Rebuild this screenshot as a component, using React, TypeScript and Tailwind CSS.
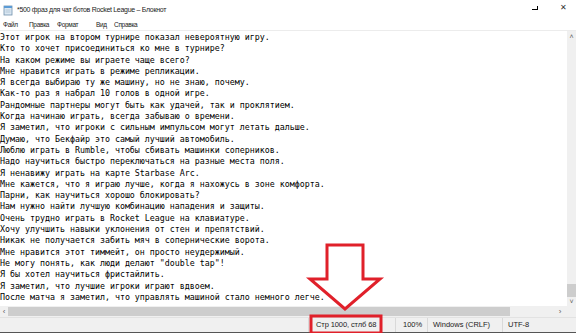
const lines = [
  "Этот игрок на втором турнире показал невероятную игру.",
  "Кто то хочет присоединиться ко мне в турнире?",
  "На каком режиме вы играете чаще всего?",
  "Мне нравится играть в режиме репликации.",
  "Я всегда выбираю ту же машину, но не знаю, почему.",
  "Как-то раз я набрал 10 голов в одной игре.",
  "Рандомные партнеры могут быть как удачей, так и проклятием.",
  "Когда начинаю играть, всегда забываю о времени.",
  "Я заметил, что игроки с сильным импульсом могут летать дальше.",
  "Думаю, что Бекфайр это самый лучший автомобиль.",
  "Люблю играть в Rumble, чтобы сбивать машинки соперников.",
  "Надо научиться быстро переключаться на разные места поля.",
  "Я ненавижу играть на карте Starbase Arc.",
  "Мне кажется, что я играю лучше, когда я нахожусь в зоне комфорта.",
  "Парни, как научиться хорошо блокировать?",
  "Нам нужно найти лучшую комбинацию нападения и защиты.",
  "Очень трудно играть в Rocket League на клавиатуре.",
  "Хочу улучшить навыки уклонения от стен и препятствий.",
  "Никак не получается забить мяч в сопернические ворота.",
  "Мне нравится этот тиммейт, он просто неудержимый.",
  "Не могу понять, как люди делают \"double tap\"!",
  "Я бы хотел научиться фристайлить.",
  "Я заметил, что лучшие игроки играют вдвоем.",
  "После матча я заметил, что управлять машиной стало немного легче.",
];

const menu = [
  { label: "Файл", w: "w-[26px]" },
  { label: "Правка", w: "w-[28px]" },
  { label: "Формат", w: "w-[39px]" },
  { label: "Вид", w: "w-[18px]" },
  { label: "Справка", w: "w-[40px]" },
];

function NotepadIcon() {
  return (
    <svg width="11" height="11" viewBox="0 0 11 11">
      <rect x="1" y="1" width="8" height="9" fill="#dbe8f3" stroke="#6f8fab" strokeWidth="0.8" />
      <rect x="1" y="1" width="8" height="2" fill="#5b9bd5" />
      <line x1="2.5" y1="5" x2="7.5" y2="5" stroke="#9fb4c7" strokeWidth="0.6" />
      <line x1="2.5" y1="7" x2="7.5" y2="7" stroke="#9fb4c7" strokeWidth="0.6" />
    </svg>
  );
}

export default function App() {
  return (
    <div className="relative flex h-[333px] w-[576px] flex-col overflow-hidden bg-white font-['Liberation_Sans',sans-serif] text-black">
      <div className="flex h-[20px] shrink-0 items-center pl-[3px]">
        <NotepadIcon />
        <span className="ml-[3px] text-[7px] tracking-[-0.3px] text-[#222]">*500 фраз для чат ботов Rocket League – Блокнот</span>
        <div className="flex-1" />
        <span className="mr-[22px] mt-[-5px] block h-[4px] w-[6px] border-b border-r border-black" />
        <span className="mr-[9px] mt-[-4px] text-[8px] leading-none text-[#333]">✕</span>
      </div>

      <div className="flex h-[11px] shrink-0 items-center border-b border-[#ececec] pl-[3px] text-[6.5px] tracking-[-0.3px] text-[#222]">
        {menu.map((m) => (
          <span key={m.label} className={m.w}>
            {m.label}
          </span>
        ))}
      </div>

      <div className="flex min-h-0 flex-1">
        <div className="min-w-0 flex-1 overflow-hidden pt-px font-['DejaVu_Sans_Mono',monospace] text-[8.3px] leading-[11.3px] whitespace-pre">
          {lines.map((l, i) => (
            <div key={i}>{l}</div>
          ))}
        </div>
        <div className="flex w-[9px] shrink-0 flex-col bg-[#f0f0f0]">
          <div className="flex h-[10px] items-center justify-center text-[7px] leading-none text-[#606060]">˄</div>
          <div className="flex-1" />
          <div className="h-[13px] bg-[#cdcdcd]" />
          <div className="flex h-[9px] items-center justify-center text-[7px] leading-none text-[#606060]">˅</div>
        </div>
      </div>

      <div className="flex h-[11px] shrink-0 items-center bg-[#f0f0f0]">
        <div className="flex w-[8px] items-center justify-center text-[8px] leading-none text-[#606060]">‹</div>
        <div className="h-[9px] w-[502px] bg-[#cdcdcd]" />
        <div className="flex-1" />
        <div className="flex w-[14px] items-center justify-center text-[8px] leading-none text-[#606060]">›</div>
        <div className="h-full w-[9px] bg-[#f0f0f0]" />
      </div>

      <div className="flex h-[16px] shrink-0 items-center border-t border-[#e2e2e2] border-b border-b-[#555] bg-[#f0f0f0] text-[7.5px] text-[#222]">
        <div className="w-[308px]" />
        <div className="h-full w-[87px] border-l border-[#d9d9d9] pl-[7px] leading-[14px] tracking-[-0.1px]">Стр 1000, стлб 68</div>
        <div className="h-full w-[32px] border-l border-[#d9d9d9] pl-[7px] leading-[14px]">100%</div>
        <div className="h-full w-[75px] border-l border-[#d9d9d9] pl-[5px] leading-[14px]">Windows (CRLF)</div>
        <div className="h-full flex-1 border-l border-[#d9d9d9] pl-[5px] leading-[14px]">UTF-8</div>
      </div>

      <svg className="absolute left-0 top-0" width="576" height="333" viewBox="0 0 576 333">
        <polygon
          points="327,245 363,245 363,279 380,279 345,309 310,279 327,279"
          fill="white"
          stroke="#e0202a"
          strokeWidth="3"
          strokeLinejoin="miter"
        />
        <rect x="311" y="316" width="70" height="17" fill="none" stroke="#e0202a" strokeWidth="3" />
      </svg>
    </div>
  );
}
